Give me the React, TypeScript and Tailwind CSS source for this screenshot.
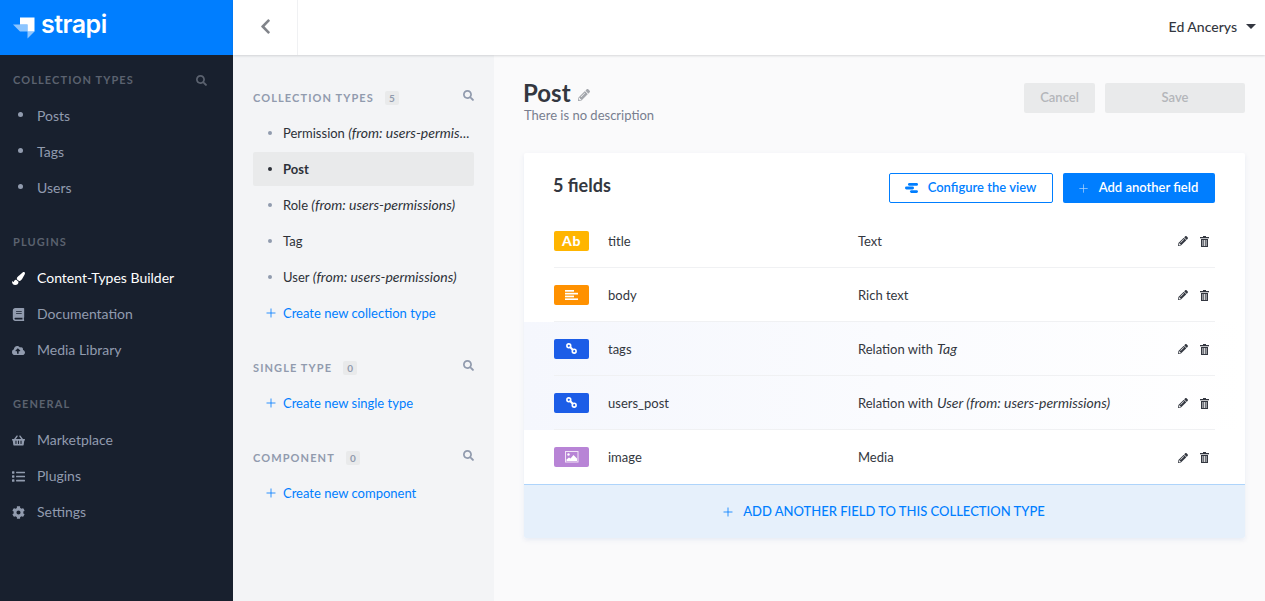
import { FaSearch, FaPaintBrush, FaBook, FaCloudUploadAlt, FaShoppingBasket, FaList, FaCog, FaPencilAlt, FaChevronLeft } from "react-icons/fa";
import { Plus } from "lucide-react";
import { ReactNode } from "react";

function Logo() {
    return (
        <svg width="22" height="22" viewBox="0 0 22 22" className="shrink-0">
            <path d="M7 0.500h14.500v14h-7v-7h-7.500z" fill="#fff" />
            <path d="M0 7.500h7v7z" fill="#fff" opacity="0.55" />
            <path d="M7 7.500h7.500v7H7z" fill="#fff" opacity="0.55" />
            <path d="M14.500 14.500h7l-7 7z" fill="#fff" opacity="0.55" />
        </svg>
    );
}

function SideHeading({ title, search }: { title: string; search?: boolean }) {
    return (
        <div className="flex h-[18px] items-center justify-between pl-[13px] pr-[26px]">
            <span className="text-[11px] font-bold tracking-[1.1px] text-[#5b626f]">{title}</span>
            {search && <FaSearch className="text-[11px] text-[#5b626f]" />}
        </div>
    );
}

function SideLink({ label, icon, active }: { label: string; icon?: ReactNode; active?: boolean }) {
    return (
        <div className={`flex h-9 items-center text-sm ${active ? "text-white" : "text-[#919bae]"}`}>
            <span className="flex w-[37px] shrink-0 justify-center px-[12px]">
                {icon ?? <span className="mb-1 ml-[3px] h-[5px] w-[5px] shrink-0 rounded-full bg-[#919bae]" />}
            </span>
            {label}
        </div>
    );
}

function SubHeading({ title, count }: { title: string; count: number }) {
    return (
        <div className="flex h-[18px] items-center justify-between">
            <div className="mt-[2px] flex items-center">
                <span className="text-[11px] font-bold tracking-[1.1px] text-[#919bae]">{title}</span>
                <span className="ml-[11px] flex h-[14px] w-[14px] items-center justify-center rounded-[2px] bg-[#e9eaeb] text-[10px] font-bold text-[#919bae]">
                    {count}
                </span>
            </div>
            <FaSearch className="mb-1 text-[11px] text-[#919bae]" />
        </div>
    );
}

function SubItem({ name, from, active, truncated }: { name: string; from?: string; active?: boolean; truncated?: boolean }) {
    return (
        <div className="flex h-9 items-center">
            <div className={`flex h-[34px] w-full items-center rounded-[2px] pl-[15px] text-[13px] ${active ? "bg-[#e9eaeb] font-bold text-[#2d3138]" : "text-[#2d3138]"}`}>
                <span className={`mr-[11px] h-[4px] w-[4px] shrink-0 rounded-full ${active ? "bg-[#2d3138]" : "bg-[#919bae]"}`} />
                <span className={`leading-[20px] ${truncated ? "w-[187px] truncate" : ""}`}>
                    {name}
                    {from && <i className="text-[14px] font-normal leading-none"> {from}</i>}
                </span>
            </div>
        </div>
    );
}

function CreateLink({ label }: { label: string }) {
    return (
        <div className="flex h-9 items-center text-[13px] text-[#007eff]">
            <Plus size={14} strokeWidth={1.4} className="ml-[11px] mr-[5px]" />
            <span className="mt-[2px]">{label}</span>
        </div>
    );
}

function LinkIcon() {
    return (
        <svg width="11" height="11" viewBox="0 0 11 11" fill="none" stroke="#fff" strokeWidth="1.600">
            <circle cx="2.800" cy="2.800" r="1.900" />
            <circle cx="8.200" cy="8.200" r="1.900" />
            <path d="M3.800 3.800l3.400 3.400" strokeWidth="2" />
        </svg>
    );
}

function TextIcon() {
    return (
        <svg width="13" height="10" viewBox="0 0 13 10" fill="#fff">
            <rect x="0" y="0" width="9" height="1.700" />
            <rect x="0" y="2.800" width="13" height="1.700" />
            <rect x="0" y="5.600" width="9" height="1.700" />
            <rect x="0" y="8.400" width="13" height="1.600" />
        </svg>
    );
}

function ImageIcon() {
    return (
        <svg width="14" height="12" viewBox="0 0 14 12">
            <rect x="0.500" y="0.500" width="12.500" height="10.500" fill="none" stroke="#f1e4f6" />
            <circle cx="3.500" cy="3.500" r="1.200" fill="#fff" />
            <path d="M1.500 10v-1.500l2.500-2 1.500 1 3-3.500 3.500 3.500v2.500z" fill="#fff" />
        </svg>
    );
}

function ConfigureIcon() {
    return (
        <svg width="13" height="10" viewBox="0 0 13 10" fill="#007eff">
            <rect x="3" y="0" width="10" height="2.800" rx="1.400" />
            <rect x="0" y="3.600" width="9" height="2.800" rx="1.400" />
            <rect x="5" y="7.200" width="8" height="2.800" rx="1.400" />
        </svg>
    );
}

function TrashIcon() {
    return (
        <svg width="9" height="11" viewBox="0 0 9 11" fill="#333740" className="mr-[6px] mt-[1px] shrink-0">
            <rect x="3" y="0" width="3" height="1.200" />
            <rect x="0" y="1" width="9" height="1.300" />
            <path d="M1 3h7v8H1zM2.500 4v6h.8V4zM4.100 4v6h.8V4zM5.700 4v6h.8V4z" fillRule="evenodd" />
        </svg>
    );
}

const fields = [
    { name: "title", badge: "bg-[#ffb500]", icon: <span className="text-[14px] font-black tracking-[0.5px] text-white">Ab</span>, type: "Text" },
    { name: "body", badge: "bg-[#ff9100]", icon: <TextIcon />, type: "Rich text" },
    { name: "tags", badge: "bg-[#1c5de7]", icon: <LinkIcon />, type: "Relation with", target: "Tag", tint: true },
    { name: "users_post", badge: "bg-[#1c5de7]", icon: <LinkIcon />, type: "Relation with", target: "User (from: users-permissions)", tint: true },
    { name: "image", badge: "bg-[#b884d6]", icon: <ImageIcon />, type: "Media", last: true },
];

function FieldRow({ field }: { field: (typeof fields)[number] }) {
    return (
        <div className={`px-[30px] ${field.tint ? "bg-gradient-to-r from-[#f5f7fd] to-white" : ""}`}>
            <div className={`flex h-[54px] items-center text-[13px] text-[#333740] ${field.last ? "" : "border-b border-[#f0f1f3]"}`}>
                <span className={`flex h-5 w-[35px] shrink-0 items-center justify-center rounded-[2px] ${field.badge}`}>{field.icon}</span>
                <span className="ml-[19px] mt-[2px] w-[250px] shrink-0">{field.name}</span>
                <span className="flex-1 leading-[20px]">
                    {field.type}
                    {field.target && <i className="ml-[4px] text-[14px] leading-none">{field.target}</i>}
                </span>
                <FaPencilAlt className="mr-[12px] mt-[1px] text-[10px] text-[#333740]" />
                <TrashIcon />
            </div>
        </div>
    );
}

export default function App() {
    return (
        <div className="flex h-[601px] w-[1265px] overflow-hidden bg-[#fafafb] font-['Lato',sans-serif]">
            <aside className="w-[233px] shrink-0 bg-[#18202e]">
                <div className="flex h-[55px] items-center gap-[6px] bg-[#007eff] pl-[13px]">
                    <Logo />
                    <span className="mb-[6px] font-['Inter',sans-serif] text-[25px] font-semibold leading-none tracking-[-0.5px] text-white">strapi</span>
                </div>
                <div className="pt-4">
                    <SideHeading title="COLLECTION TYPES" search />
                    <div className="mt-[9px]">
                        <SideLink label="Posts" />
                        <SideLink label="Tags" />
                        <SideLink label="Users" />
                    </div>
                    <div className="mt-[27px]">
                        <SideHeading title="PLUGINS" />
                    </div>
                    <div className="mt-[9px]">
                        <SideLink label="Content-Types Builder" active icon={<FaPaintBrush className="shrink-0 text-[13px]" />} />
                        <SideLink label="Documentation" icon={<FaBook className="shrink-0 text-[13px]" />} />
                        <SideLink label="Media Library" icon={<FaCloudUploadAlt className="shrink-0 text-[13px]" />} />
                    </div>
                    <div className="mt-[27px]">
                        <SideHeading title="GENERAL" />
                    </div>
                    <div className="mt-[9px]">
                        <SideLink label="Marketplace" icon={<FaShoppingBasket className="shrink-0 text-[13px]" />} />
                        <SideLink label="Plugins" icon={<FaList className="shrink-0 text-[13px]" />} />
                        <SideLink label="Settings" icon={<FaCog className="shrink-0 text-[13px]" />} />
                    </div>
                </div>
            </aside>
            <div className="flex min-w-0 flex-1 flex-col">
                <header className="z-10 flex h-[55px] shrink-0 items-center bg-white shadow-[0_1px_2px_rgba(40,42,49,0.16)]">
                    <div className="flex h-full w-[65px] items-center justify-center border-r border-[#f0f1f3]">
                        <FaChevronLeft className="mb-[3px] text-[17px] text-[#81848a]" />
                    </div>
                    <div className="ml-auto mb-[3px] flex items-center pr-[9px] text-[14px] font-medium text-[#333740]">
                        Ed Ancerys
                        <span className="ml-[9px] h-0 w-0 border-x-[5px] border-t-[5px] border-x-transparent border-t-[#333740]" />
                    </div>
                </header>
                <div className="flex min-h-0 flex-1">
                    <nav className="w-[261px] shrink-0 bg-[#f3f4f6] pl-5 pr-5 pt-[33px]">
                        <SubHeading title="COLLECTION TYPES" count={5} />
                        <div className="mt-[9px]">
                            <SubItem name="Permission" from="(from: users-permissions)" truncated />
                            <SubItem name="Post" active />
                            <SubItem name="Role" from="(from: users-permissions)" />
                            <SubItem name="Tag" />
                            <SubItem name="User" from="(from: users-permissions)" />
                            <CreateLink label="Create new collection type" />
                        </div>
                        <div className="mt-[27px]">
                            <SubHeading title="SINGLE TYPE" count={0} />
                        </div>
                        <div className="mt-[9px]">
                            <CreateLink label="Create new single type" />
                        </div>
                        <div className="mt-[27px]">
                            <SubHeading title="COMPONENT" count={0} />
                        </div>
                        <div className="mt-[9px]">
                            <CreateLink label="Create new component" />
                        </div>
                    </nav>
                    <main className="min-w-0 flex-1 pl-[30px] pr-5 pt-[22px]">
                        <div className="flex items-start justify-between">
                            <div className="h-[48px]">
                                <div className="-ml-px flex items-center">
                                    <h1 className="text-[24px] font-bold leading-[32px] text-[#333740]">Post</h1>
                                    <FaPencilAlt className="ml-[7px] mt-[4px] text-[12px] text-[#a3a6ac]" />
                                </div>
                                <p className="text-[13px] leading-[12px] text-[#787e8f]">There is no description</p>
                            </div>
                            <div className="mt-[6px] flex gap-[10px]">
                                <button className="h-[30px] w-[71px] rounded-[2px] bg-[#e9eaeb] text-[13px] font-semibold text-[#b4b6ba]">Cancel</button>
                                <button className="h-[30px] w-[140px] rounded-[2px] bg-[#e9eaeb] text-[13px] font-semibold text-[#b4b6ba]">Save</button>
                            </div>
                        </div>
                        <section className="mt-[28px] overflow-hidden rounded-[2px] bg-white shadow-[0_2px_4px_rgba(227,233,243,0.8)]">
                            <div className="flex h-[61px] items-center justify-between pl-[30px] pr-[30px] pt-[9px]">
                                <h2 className="-ml-px mb-[5px] text-[18px] font-bold text-[#333740]">5 fields</h2>
                                <div className="flex gap-[10px]">
                                    <button className="flex h-[30px] w-[164px] items-center justify-center rounded-[2px] border border-[#007eff] bg-white text-[13px] font-semibold text-[#007eff]">
                                        <ConfigureIcon />
                                        <span className="ml-[10px] mr-[1px]">Configure the view</span>
                                    </button>
                                    <button className="flex h-[30px] w-[152px] items-center justify-center rounded-[2px] bg-[#007eff] text-[13px] font-semibold text-white">
                                        <Plus size={13} strokeWidth={1.4} className="text-[#a6cffb]" />
                                        <span className="ml-[9px] mr-[3px]">Add another field</span>
                                    </button>
                                </div>
                            </div>
                            {fields.map((f) => (
                                <FieldRow key={f.name} field={f} />
                            ))}
                            <div className="flex h-[54px] items-center justify-center border-t border-[#aed4fb] bg-[#e6f0fb] pr-[3px] text-[13px] font-medium text-[#007eff]">
                                <Plus size={14} strokeWidth={1.4} className="mr-[8px]" />
                                ADD ANOTHER FIELD TO THIS COLLECTION TYPE
                            </div>
                        </section>
                    </main>
                </div>
            </div>
        </div>
    );
}
